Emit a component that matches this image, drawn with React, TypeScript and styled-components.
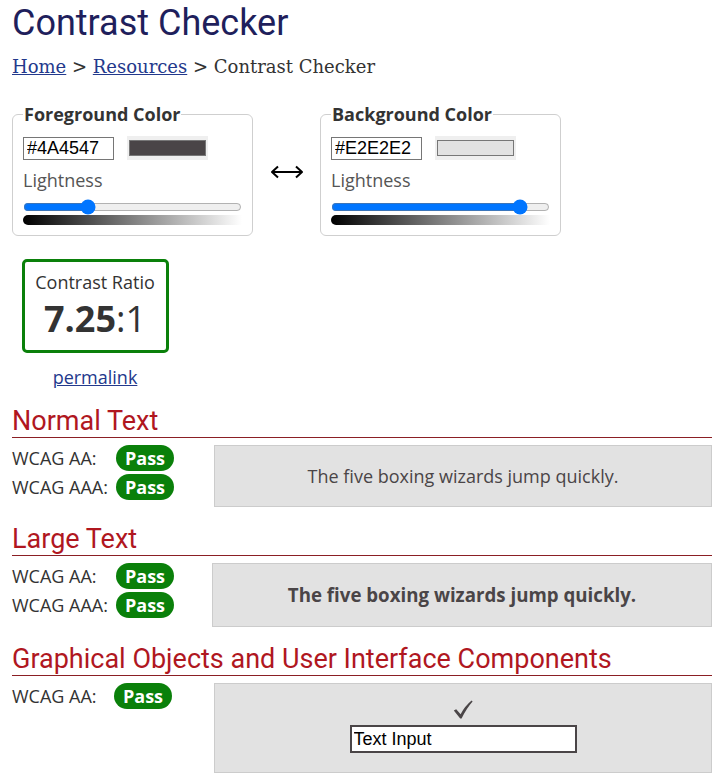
import React from "react";
import styled, { createGlobalStyle } from "styled-components";

const Global = createGlobalStyle`
  html, body { margin: 0; padding: 0; background: #fff; }
  body { font-family: "Open Sans", "DejaVu Sans", sans-serif; color: #333; }
  * { box-sizing: border-box; }
`;

const Page = styled.div`
  padding: 2px 8px 0 12px;
  width: 720px;
`;

const Title = styled.h1`
  margin: 0;
  font-family: Roboto, "Liberation Sans", sans-serif;
  font-weight: 400;
  font-size: 36px;
  line-height: 42px;
  color: #1f1f5c;
`;

const Crumbs = styled.nav`
  margin-top: 11px;
  font-family: "DejaVu Serif", "Liberation Serif", serif;
  font-size: 18px;
  line-height: 24px;
  color: #333;
`;

const Link = styled.a`
  color: #23398c;
  text-decoration: underline;
`;

const PickerRow = styled.div`
  margin-top: 24px;
  display: flex;
  align-items: center;
`;

const Field = styled.fieldset`
  margin: 0;
  width: 241px;
  border: 1px solid #cfcfcf;
  border-radius: 6px;
  padding: 0 10px 10px;
  display: flex;
  flex-direction: column;
`;

const Legend = styled.legend`
  padding: 0 1px;
  font-weight: 700;
  font-size: 18px;
  line-height: 22px;
  color: #333;
`;

const HexRow = styled.div`
  margin-top: 11px;
  display: flex;
  align-items: center;
  gap: 13px;
`;

const HexInput = styled.input`
  width: 91px;
  height: 23px;
  border: 1px solid #767676;
  padding: 0 3px;
  font-family: "Liberation Sans", Arial, sans-serif;
  font-size: 18px;
  color: #000;
  outline: none;
  margin: 0;
`;

const SwatchButton = styled.span`
  display: inline-flex;
  width: 81px;
  height: 24px;
  padding: 4px 2px;
  background: #efefef;
`;

const SwatchFill = styled.span<{ $c: string }>`
  flex: 1;
  background: ${(p) => p.$c};
  border: 1px solid #777;
`;

const FieldLabel = styled.div`
  margin-top: 8px;
  font-size: 18px;
  line-height: 25px;
  color: #555;
`;

const Range = styled.input`
  margin: 6px 0 0;
  width: 100%;
  height: 16px;
  display: block;
`;

const Gradient = styled.div`
  height: 10px;
  border-radius: 5px 0 0 5px;
  background: linear-gradient(to right, #000, #fff);
`;

const Swap = styled.div`
  width: 67px;
  display: flex;
  justify-content: center;
  padding-top: 4px;
`;

const RatioColumn = styled.div`
  margin-top: 23px;
  width: 166px;
  display: flex;
  flex-direction: column;
  align-items: center;
`;

const RatioBox = styled.div`
  width: 147px;
  border: 3px solid #0a800a;
  border-radius: 5px;
  padding: 8px 0 7px;
  text-align: center;
`;

const RatioLabel = styled.div`
  font-size: 18px;
  line-height: 25px;
  color: #333;
`;

const RatioValue = styled.div`
  font-size: 36px;
  line-height: 48px;
  color: #333;
  b { font-weight: 700; }
`;

const Permalink = styled.a`
  margin-top: 12px;
  font-size: 18px;
  line-height: 24px;
  color: #23398c;
  text-decoration: underline;
`;

const Section = styled.section<{ $top: number }>`
  margin-top: ${(p) => p.$top}px;
`;

const SectionTitle = styled.h2`
  margin: 0;
  font-family: Roboto, "Liberation Sans", sans-serif;
  font-weight: 400;
  font-size: 27px;
  line-height: 32px;
  color: #b0171f;
  border-bottom: 1px solid #8b1f24;
`;

const Results = styled.div`
  margin-top: 7px;
  display: flex;
  align-items: flex-start;
`;

const Verdicts = styled.div<{ $w: number }>`
  width: ${(p) => p.$w}px;
  display: grid;
  grid-template-columns: ${(p) => p.$w - 58}px 58px;
  row-gap: 3px;
  align-items: center;
  flex-shrink: 0;
`;

const Level = styled.span`
  font-size: 18px;
  line-height: 26px;
  color: #333;
`;

const Badge = styled.span`
  height: 26px;
  border-radius: 13px;
  background: #0a800a;
  color: #fff;
  font-weight: 700;
  font-size: 18px;
  line-height: 26px;
  text-align: center;
`;

const Sample = styled.div<{ $gap: number; $bold?: boolean }>`
  margin-left: ${(p) => p.$gap}px;
  flex: 1;
  background: #e2e2e2;
  border: 1px solid #cccccc;
  padding: 18px 8px;
  text-align: center;
  color: #4a4547;
  font-size: ${(p) => (p.$bold ? "18.7px" : "18px")};
  font-weight: ${(p) => (p.$bold ? 700 : 400)};
  line-height: ${(p) => (p.$bold ? "26px" : "24px")};
`;

const UiSample = styled.div`
  margin-left: 42px;
  flex: 1;
  height: 90px;
  background: #e2e2e2;
  border: 1px solid #cccccc;
  padding-top: 16px;
  display: flex;
  flex-direction: column;
  align-items: center;
`;

const CheckMark = styled.svg`
  display: block;
  margin-bottom: 6px;
`;

const DemoInput = styled.input`
  width: 227px;
  height: 28px;
  border: 2px solid #4a4547;
  padding: 0 2px;
  margin: 0;
  background: #fff;
  font-family: "Liberation Sans", Arial, sans-serif;
  font-size: 18px;
  color: #000;
  outline: none;
`;

const SwapArrow = () => (
  <svg width="34" height="14" viewBox="0 0 34 14" aria-hidden>
    <path d="M2 7H32" stroke="#000" strokeWidth="2" fill="none" />
    <path d="M8 1.5L2 7l6 5.5M26 1.5L32 7l-6 5.5" stroke="#000" strokeWidth="2" fill="none" strokeLinejoin="round" />
  </svg>
);

const Tick = () => (
  <CheckMark width="20" height="19" viewBox="0 0 20 19" aria-hidden>
    <path
      d="M0.8 10.6 L3.2 9.3 L7.6 14.2 Q12 6 18.6 0.6 L19.6 1.6 Q13.5 8.5 8.6 18.6 L7.2 18.6 Z"
      fill="#4a4547"
    />
  </CheckMark>
);

const ColorField = ({ title, hex, value }: { title: string; hex: string; value: number }) => (
  <Field>
    <Legend>{title}</Legend>
    <HexRow>
      <HexInput defaultValue={hex} />
      <SwatchButton>
        <SwatchFill $c={hex} />
      </SwatchButton>
    </HexRow>
    <FieldLabel>Lightness</FieldLabel>
    <Range type="range" min={0} max={100} defaultValue={value} />
    <Gradient />
  </Field>
);

const Verdict = ({ levels, w }: { levels: string[]; w: number }) => (
  <Verdicts $w={w}>
    {levels.map((l) => (
      <React.Fragment key={l}>
        <Level>{l}</Level>
        <Badge>Pass</Badge>
      </React.Fragment>
    ))}
  </Verdicts>
);

export default function App() {
  return (
    <>
      <Global />
      <Page>
        <Title>Contrast Checker</Title>
        <Crumbs>
          <Link href="#">Home</Link> &gt; <Link href="#">Resources</Link> &gt; Contrast Checker
        </Crumbs>
        <PickerRow>
          <ColorField title="Foreground Color" hex="#4A4547" value={28} />
          <Swap>
            <SwapArrow />
          </Swap>
          <ColorField title="Background Color" hex="#E2E2E2" value={89} />
        </PickerRow>
        <RatioColumn>
          <RatioBox>
            <RatioLabel>Contrast Ratio</RatioLabel>
            <RatioValue>
              <b>7.25</b>:1
            </RatioValue>
          </RatioBox>
          <Permalink href="#">permalink</Permalink>
        </RatioColumn>
        <Section $top={16}>
          <SectionTitle>Normal Text</SectionTitle>
          <Results>
            <Verdict levels={["WCAG AA:", "WCAG AAA:"]} w={162} />
            <Sample $gap={40}>The five boxing wizards jump quickly.</Sample>
          </Results>
        </Section>
        <Section $top={16}>
          <SectionTitle>Large Text</SectionTitle>
          <Results>
            <Verdict levels={["WCAG AA:", "WCAG AAA:"]} w={162} />
            <Sample $gap={38} $bold>
              The five boxing wizards jump quickly.
            </Sample>
          </Results>
        </Section>
        <Section $top={16}>
          <SectionTitle>Graphical Objects and User Interface Components</SectionTitle>
          <Results>
            <Verdict levels={["WCAG AA:"]} w={160} />
            <UiSample>
              <Tick />
              <DemoInput defaultValue="Text Input" />
            </UiSample>
          </Results>
        </Section>
      </Page>
    </>
  );
}
